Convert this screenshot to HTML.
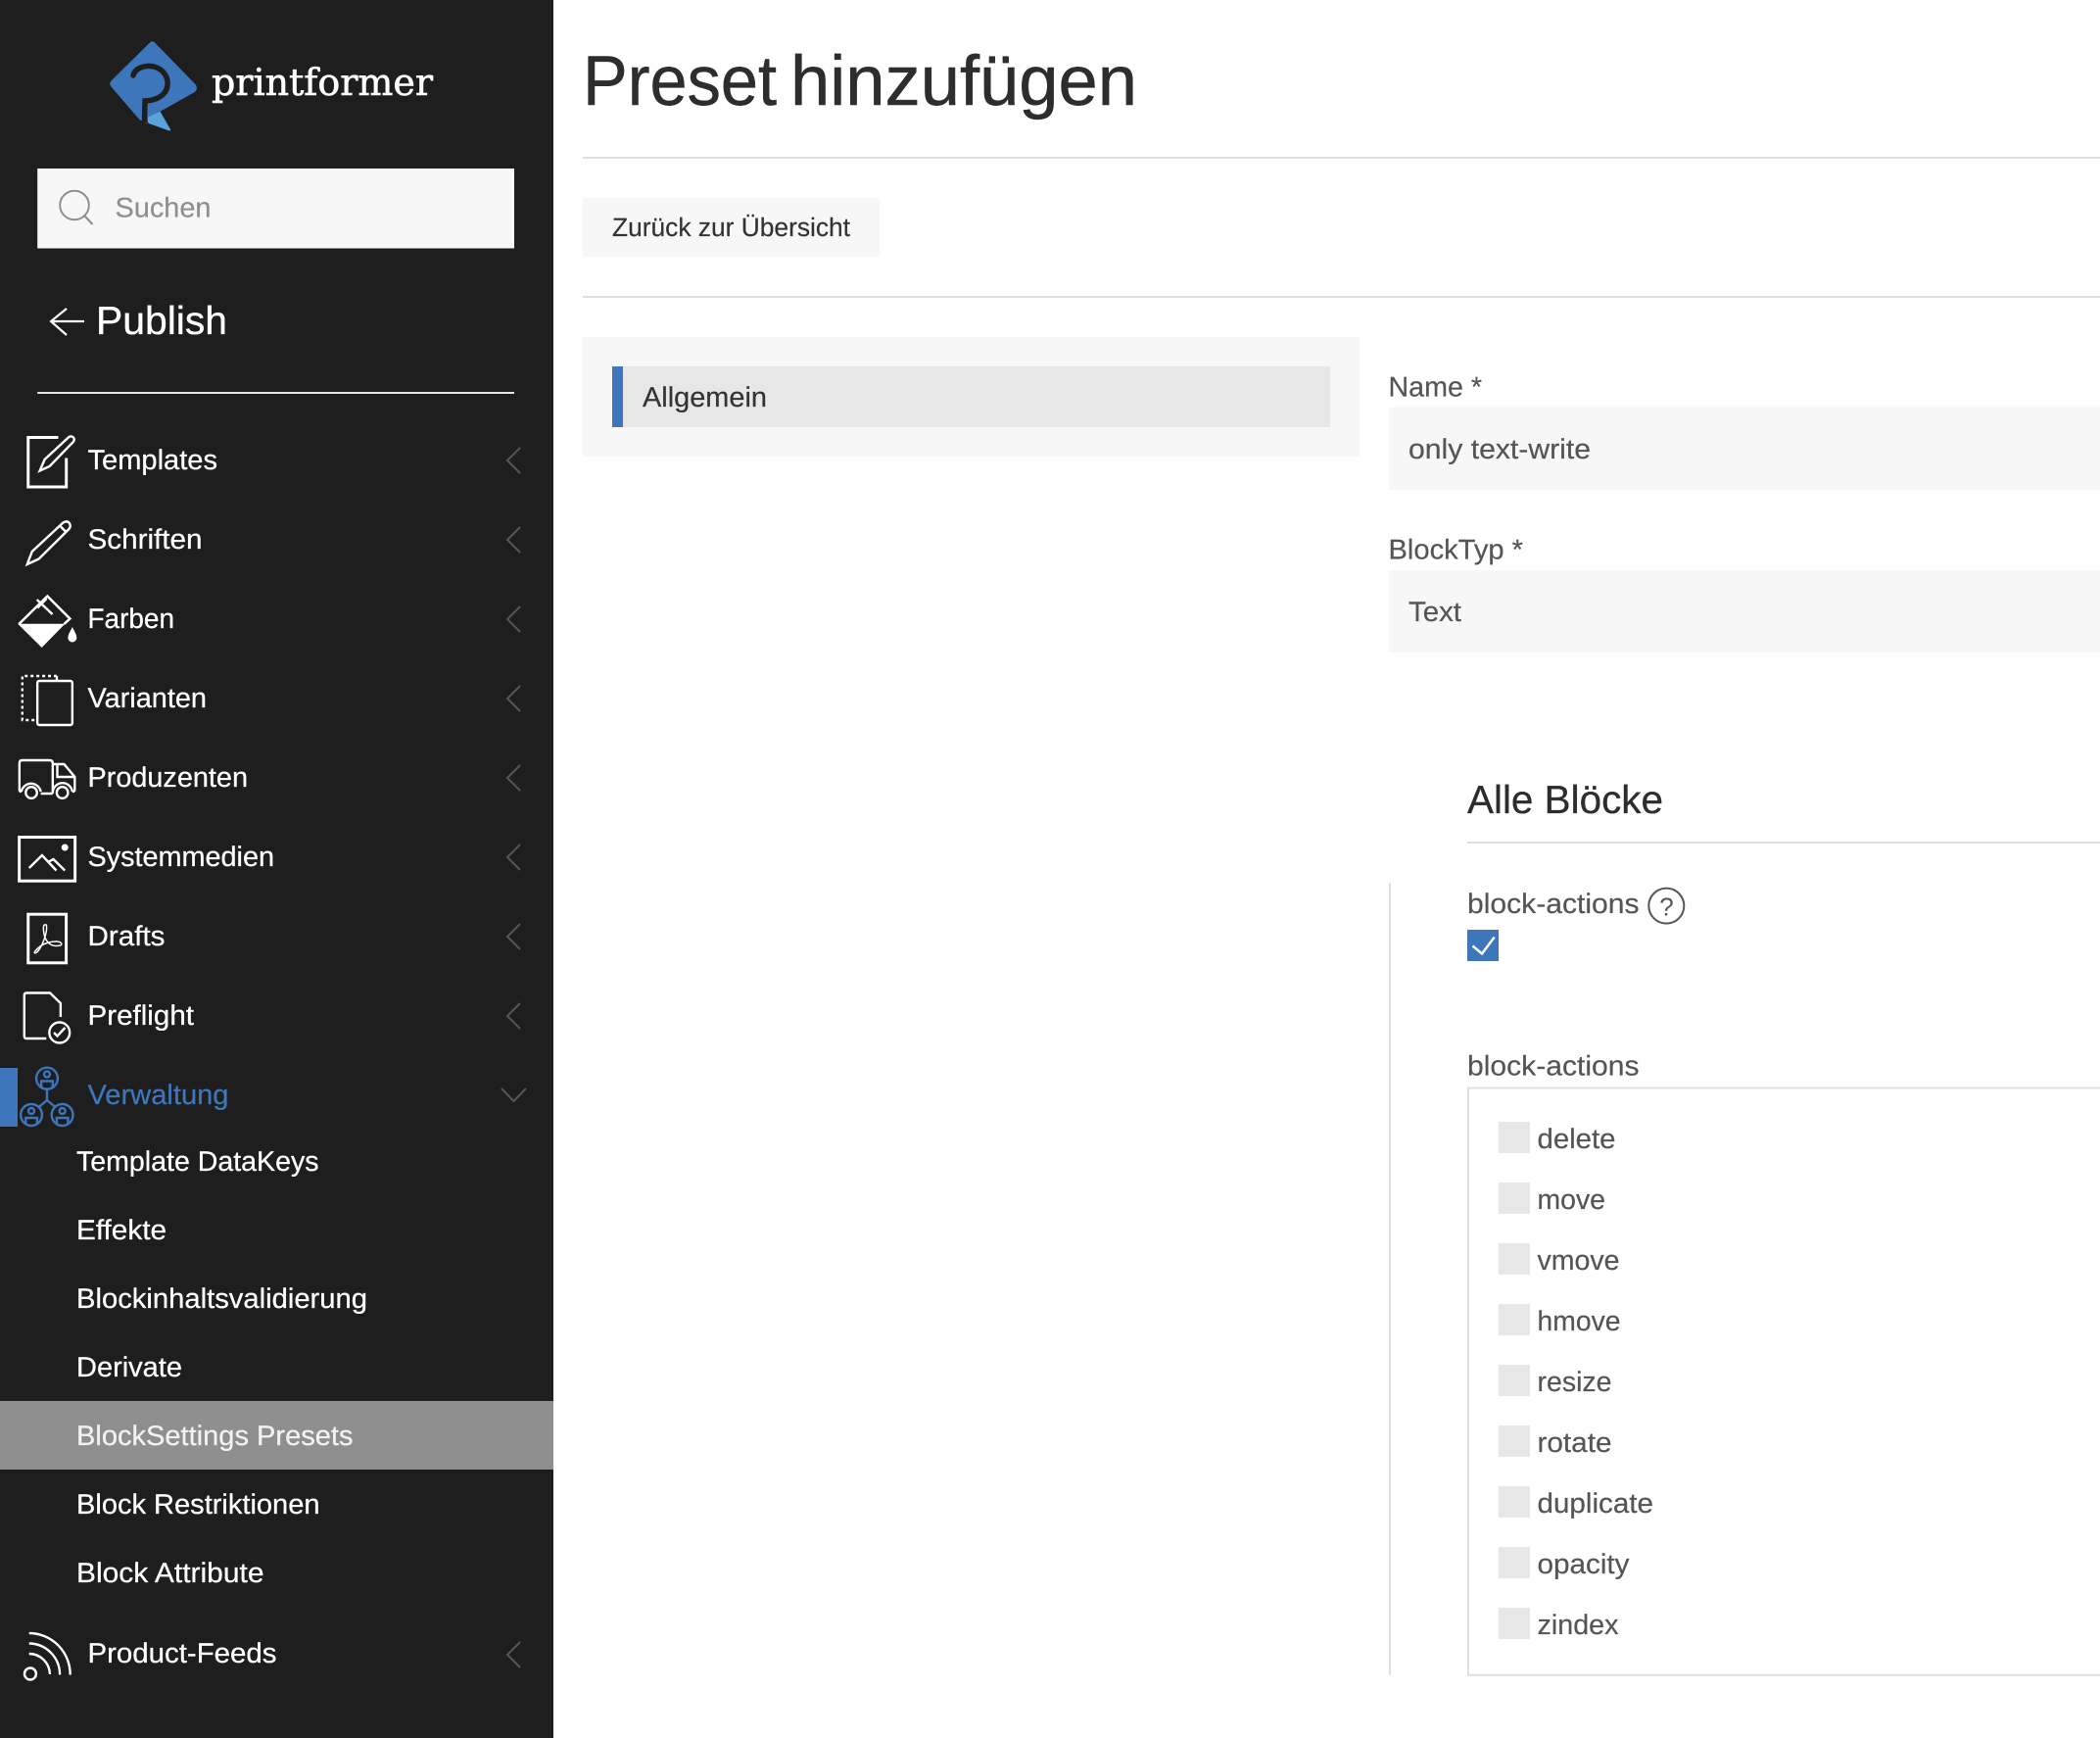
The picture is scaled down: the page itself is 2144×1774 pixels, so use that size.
<!DOCTYPE html>
<html lang="de">
<head>
<meta charset="utf-8">
<title>Preset hinzufügen</title>
<style>
html,body{margin:0;padding:0;background:#fff;width:2144px;height:1774px;overflow:hidden}
svg{display:block;position:absolute;left:0;top:0}
text{font-family:"Liberation Sans",Arial,sans-serif;text-rendering:geometricPrecision}
.m{font-size:28.500px;fill:#fff;stroke:#fff;stroke-width:.25}
.f{font-size:28.500px;fill:#555;stroke:#555;stroke-width:.2}
.chev{fill:none;stroke:#555;stroke-width:2}
.i{fill:none;stroke:#fff;stroke-width:2.400}
.b{fill:none;stroke:#3d76bb;stroke-width:2.400}
</style>
</head>
<body>
<svg width="2144" height="1774" viewBox="0 0 2144 1774" xmlns="http://www.w3.org/2000/svg">
<rect width="2144" height="1774" fill="#fff"/>
<!-- Sidebar -->
<rect x="0" y="0" width="565" height="1774" fill="#1e1e1e"/>
<!-- Logo -->
<path d="M153 43.500 Q155.700 41 158 43.500 L199.500 86 Q203 91 198 94.500 L164 113.500 L150.700 119.500 L150 126 L145 123.500 Q143 123 141 120.500 L113.500 88.500 Q111 85.500 113.500 82.500 Z" fill="#3d76bb"/>
<path d="M150.700 119.500 L163.500 113.800 L174 132 Q174.500 134 172 133.300 L152 126 Q150.500 125 150.700 123 Z" fill="#5aa2db"/>
<path d="M136 77 C138 69 149 66 157 68 C167 70.500 172 79 171 87 C170 97 160 102.500 148 103 L147.500 125" fill="none" stroke="#1e1e1e" stroke-width="5.500"/>
<circle cx="136" cy="77" r="2.800" fill="#1e1e1e"/>
<text x="216" y="97" font-size="38" fill="#fff" stroke="#fff" stroke-width=".6" textLength="226" lengthAdjust="spacingAndGlyphs" style="font-family:'DejaVu Serif','Liberation Serif',serif">printformer</text>
<!-- Search -->
<rect x="38.200" y="172" width="486.800" height="81.500" fill="#f7f7f7"/>
<circle cx="76" cy="209.500" r="14.800" fill="none" stroke="#8f8f8f" stroke-width="2"/>
<path d="M86.500 220.500 L94.500 229" fill="none" stroke="#8f8f8f" stroke-width="2.200"/>
<text x="117.500" y="221.500" font-size="28.500" fill="#8f8f8f" stroke="#8f8f8f" stroke-width=".2" textLength="98" lengthAdjust="spacingAndGlyphs">Suchen</text>
<!-- Publish -->
<path d="M86 328 H52 M68 315 L52 328 L68 342" fill="none" stroke="#fff" stroke-width="2.200"/>
<text x="98" y="341" font-size="40.500" fill="#fff" stroke="#fff" stroke-width=".3" textLength="134" lengthAdjust="spacingAndGlyphs">Publish</text>
<rect x="38.200" y="400" width="486.800" height="2" fill="#e4e4e4"/>
<!-- Active accent and row highlight -->
<rect x="0" y="1090" width="18" height="60" fill="#3d76bb"/>
<rect x="0" y="1430" width="565" height="70" fill="#8f8f8f"/>
<!-- Menu text -->
<text class="m" x="89.500" y="479" textLength="132.500" lengthAdjust="spacingAndGlyphs">Templates</text>
<text class="m" x="89.500" y="560" textLength="117" lengthAdjust="spacingAndGlyphs">Schriften</text>
<text class="m" x="89.500" y="641" textLength="88.500" lengthAdjust="spacingAndGlyphs">Farben</text>
<text class="m" x="89.500" y="722" textLength="121.500" lengthAdjust="spacingAndGlyphs">Varianten</text>
<text class="m" x="89.500" y="803" textLength="163.500" lengthAdjust="spacingAndGlyphs">Produzenten</text>
<text class="m" x="89.500" y="884" textLength="190.500" lengthAdjust="spacingAndGlyphs">Systemmedien</text>
<text class="m" x="89.500" y="965" textLength="79" lengthAdjust="spacingAndGlyphs">Drafts</text>
<text class="m" x="89.500" y="1046" textLength="108.500" lengthAdjust="spacingAndGlyphs">Preflight</text>
<text class="m" x="89.500" y="1127" textLength="144" lengthAdjust="spacingAndGlyphs" style="fill:#3d76bb;stroke:#3d76bb">Verwaltung</text>
<text class="m" x="78" y="1195" textLength="247.500" lengthAdjust="spacingAndGlyphs">Template DataKeys</text>
<text class="m" x="78" y="1265" textLength="92" lengthAdjust="spacingAndGlyphs">Effekte</text>
<text class="m" x="78" y="1335" textLength="297" lengthAdjust="spacingAndGlyphs">Blockinhaltsvalidierung</text>
<text class="m" x="78" y="1405" textLength="108" lengthAdjust="spacingAndGlyphs">Derivate</text>
<text class="m" x="78" y="1475" textLength="282.500" lengthAdjust="spacingAndGlyphs" style="fill:#f2f2f2;stroke:#f2f2f2">BlockSettings Presets</text>
<text class="m" x="78" y="1545" textLength="248.500" lengthAdjust="spacingAndGlyphs">Block Restriktionen</text>
<text class="m" x="78" y="1615" textLength="191.500" lengthAdjust="spacingAndGlyphs">Block Attribute</text>
<text class="m" x="89.500" y="1697" textLength="193" lengthAdjust="spacingAndGlyphs">Product-Feeds</text>
<!-- Chevrons -->
<path class="chev" d="M531 457 L518 470 L531 483"/>
<path class="chev" d="M531 538 L518 551 L531 564"/>
<path class="chev" d="M531 619 L518 632 L531 645"/>
<path class="chev" d="M531 700 L518 713 L531 726"/>
<path class="chev" d="M531 781 L518 794 L531 807"/>
<path class="chev" d="M531 862 L518 875 L531 888"/>
<path class="chev" d="M531 943 L518 956 L531 969"/>
<path class="chev" d="M531 1024 L518 1037 L531 1050"/>
<path class="chev" d="M512 1111 L524.500 1124 L537 1111"/>
<path class="chev" d="M531 1676 L518 1689 L531 1702"/>
<g transform="scale(.9913,1)">
<!-- Templates icon -->
<path class="i" style="stroke-width:3" d="M60 446.500 H29 V497 H68.300 V467.500"/>
<path class="i" d="M41 480.500 L46 469 L71 446 Q74 444.500 76 447 Q77 449 75.500 451 L51 476 Z"/>
<!-- Schriften icon -->
<path class="i" d="M28 576 L33 563 L65 533.500 Q69 531 71.500 534 Q73.500 537 71 540 L40 570.500 Z M62 537 L68 543"/>
<!-- Farben icon -->
<path class="i" style="stroke-width:2.500" d="M19.500 637 L48.800 608.500 L72 631.500 L66 637 M38 612 L54 627 M38.500 620.500 L48 611"/>
<path d="M18.300 636.700 H67 L43 661 Z" fill="#fff"/>
<path d="M74.500 640 C77 645 79 648 79 651 A4.500 4.500 0 0 1 70 651 C70 648 72 645 74.500 640 Z" fill="#fff"/>
<!-- Varianten icon -->
<path class="i" stroke-dasharray="3 3" d="M58.500 690 H23 V735 H37"/>
<path d="M58.500 690 V695" class="i"/>
<rect class="i" x="38.500" y="695" width="36" height="45" rx="2"/>
<!-- Produzenten icon -->
<path class="i" d="M54.300 810 V779 Q54.300 776 51 776 H23 Q20 776 20 779 V806 Q20 808 22 808 M42 810 H54.300"/>
<path class="i" d="M55 780 H66 L77 793 V806 Q77 808 74.500 808 M59 781 V793 H76"/>
<path class="i" d="M22 808 A10.200 10.200 0 0 1 42 808 M54.300 808 A10.200 10.200 0 0 1 74.500 808"/>
<circle cx="32.300" cy="809" r="5.800" class="i"/>
<circle cx="64.200" cy="809" r="5.800" class="i"/>
<!-- Systemmedien icon -->
<rect class="i" style="stroke-width:3" x="19.800" y="854.500" width="57.500" height="44.700"/>
<circle cx="66.800" cy="865" r="3.500" fill="#fff"/>
<path class="i" d="M30 886 L43.300 873 L58 888.500 M49.500 880 L55 877 L66.800 888.500"/>
<!-- Drafts icon -->
<rect class="i" style="stroke-width:3" x="29" y="933.200" width="39.200" height="49.600"/>
<path class="i" style="stroke-width:1.500" d="M46 944 C43.500 944 45 956 48 960 C52 966 58 966 62 965 C65 964 63 961 58 961 C50 961 42 964 37 970 C34 973 36 974 39 971 C44 965 48.500 952 48 946 C48 943.500 47 943.500 46 944 Z"/>
<!-- Preflight icon -->
<path class="i" d="M47.700 1060 H27.500 Q25 1060 25 1057.500 V1016 Q25 1013.500 27.500 1013.500 H51.500 L62.400 1024 V1038"/>
<circle class="i" cx="61.300" cy="1054" r="10.500"/>
<path class="i" d="M55.500 1054 L59 1057.500 L67 1049"/>
<!-- Verwaltung icon -->
<g class="b">
<circle class="b" cx="48.400" cy="1100.700" r="11"/>
<circle class="b" cx="48.400" cy="1096.500" r="3"/>
<path class="b" d="M42.500 1109.500 V1103.500 H54.300 V1109.500"/>
<circle class="b" cx="32.300" cy="1138" r="11"/>
<circle class="b" cx="32.300" cy="1134" r="3"/>
<path class="b" d="M26.500 1147 V1141 H38.300 V1147"/>
<circle class="b" cx="64.200" cy="1138" r="11"/>
<circle class="b" cx="64.200" cy="1134" r="3"/>
<path class="b" d="M58.400 1147 V1141 H70 V1147"/>
<path class="b" d="M48.400 1112 V1123 L40 1130 M48.400 1123 L57 1130"/>
</g>
<!-- Product-Feeds icon -->
<circle class="i" cx="31.200" cy="1708.500" r="6" style="stroke-width:2.500"/>
<path class="i" d="M30 1667 A42.300 42.300 0 0 1 72.300 1709.500 M30 1677.500 A31.800 31.800 0 0 1 61.600 1709.500 M30 1688 A21.500 21.500 0 0 1 51.400 1709"/>
</g>

<!-- Main -->
<text x="595" y="107" font-size="72" fill="#2d2d2d" stroke="#2d2d2d" stroke-width=".5" textLength="198" lengthAdjust="spacingAndGlyphs">Preset</text>
<text x="807" y="107" font-size="72" fill="#2d2d2d" stroke="#2d2d2d" stroke-width=".5" textLength="354" lengthAdjust="spacingAndGlyphs">hinzufügen</text>
<rect x="595" y="160" width="1549" height="2" fill="#e0e0e0"/>
<rect x="595" y="202" width="303" height="60" fill="#f7f7f7"/>
<text x="625" y="241" font-size="26.500" fill="#333" stroke="#333" stroke-width=".2" textLength="243" lengthAdjust="spacingAndGlyphs">Zurück zur Übersicht</text>
<rect x="595" y="302" width="1549" height="2" fill="#e0e0e0"/>
<rect x="595" y="344" width="793" height="122" fill="#f7f7f7"/>
<rect x="625" y="374" width="733" height="62" fill="#e7e7e7"/>
<rect x="625" y="374" width="11" height="62" fill="#3d76bb"/>
<text x="656" y="415" font-size="28.500" fill="#333" stroke="#333" stroke-width=".2" textLength="127" lengthAdjust="spacingAndGlyphs">Allgemein</text>

<text class="f" x="1417.500" y="404.500" textLength="95.500" lengthAdjust="spacingAndGlyphs">Name *</text>
<rect x="1418" y="415.500" width="726" height="84.500" fill="#f7f7f7"/>
<text class="f" x="1438" y="468" textLength="186" lengthAdjust="spacingAndGlyphs">only text-write</text>
<text class="f" x="1417.500" y="570.500" textLength="137.500" lengthAdjust="spacingAndGlyphs">BlockTyp *</text>
<rect x="1418" y="582" width="726" height="84" fill="#f7f7f7"/>
<text class="f" x="1438" y="634" textLength="54" lengthAdjust="spacingAndGlyphs">Text</text>

<text x="1498" y="830" font-size="40.500" fill="#2d2d2d" stroke="#2d2d2d" stroke-width=".3" textLength="200" lengthAdjust="spacingAndGlyphs">Alle Blöcke</text>
<rect x="1498" y="859" width="646" height="2" fill="#e0e0e0"/>
<rect x="1418" y="901" width="2" height="809" fill="#e0e0e0"/>

<text class="f" x="1498" y="932" textLength="175.500" lengthAdjust="spacingAndGlyphs">block-actions</text>
<circle cx="1701.300" cy="924.600" r="18" fill="none" stroke="#555" stroke-width="2"/>
<text x="1701.500" y="934.500" font-size="26" fill="#555" text-anchor="middle">?</text>
<rect x="1498" y="949" width="32" height="32" fill="#3d76bb"/>
<path d="M1503.500 965.500 L1513 973.500 L1525.700 956.500" fill="none" stroke="#fff" stroke-width="2.500"/>

<text class="f" x="1498" y="1097.500" textLength="175.500" lengthAdjust="spacingAndGlyphs">block-actions</text>
<path d="M2144 1110.500 H1499 V1709.700 H2144" fill="none" stroke="#e0e0e0" stroke-width="2"/>

<rect x="1530" y="1145" width="32" height="32" fill="#e7e7e7"/>
<text class="f" x="1569.500" y="1172" textLength="80" lengthAdjust="spacingAndGlyphs">delete</text>
<rect x="1530" y="1207" width="32" height="32" fill="#e7e7e7"/>
<text class="f" x="1569.500" y="1234" textLength="69.500" lengthAdjust="spacingAndGlyphs">move</text>
<rect x="1530" y="1269" width="32" height="32" fill="#e7e7e7"/>
<text class="f" x="1569.500" y="1296" textLength="84" lengthAdjust="spacingAndGlyphs">vmove</text>
<rect x="1530" y="1331" width="32" height="32" fill="#e7e7e7"/>
<text class="f" x="1569.500" y="1358" textLength="85" lengthAdjust="spacingAndGlyphs">hmove</text>
<rect x="1530" y="1393" width="32" height="32" fill="#e7e7e7"/>
<text class="f" x="1569.500" y="1420" textLength="76" lengthAdjust="spacingAndGlyphs">resize</text>
<rect x="1530" y="1455" width="32" height="32" fill="#e7e7e7"/>
<text class="f" x="1569.500" y="1482" textLength="76" lengthAdjust="spacingAndGlyphs">rotate</text>
<rect x="1530" y="1517" width="32" height="32" fill="#e7e7e7"/>
<text class="f" x="1569.500" y="1544" textLength="118.500" lengthAdjust="spacingAndGlyphs">duplicate</text>
<rect x="1530" y="1579" width="32" height="32" fill="#e7e7e7"/>
<text class="f" x="1569.500" y="1606" textLength="94" lengthAdjust="spacingAndGlyphs">opacity</text>
<rect x="1530" y="1641" width="32" height="32" fill="#e7e7e7"/>
<text class="f" x="1569.500" y="1668" textLength="83" lengthAdjust="spacingAndGlyphs">zindex</text>
</svg>
</body>
</html>
